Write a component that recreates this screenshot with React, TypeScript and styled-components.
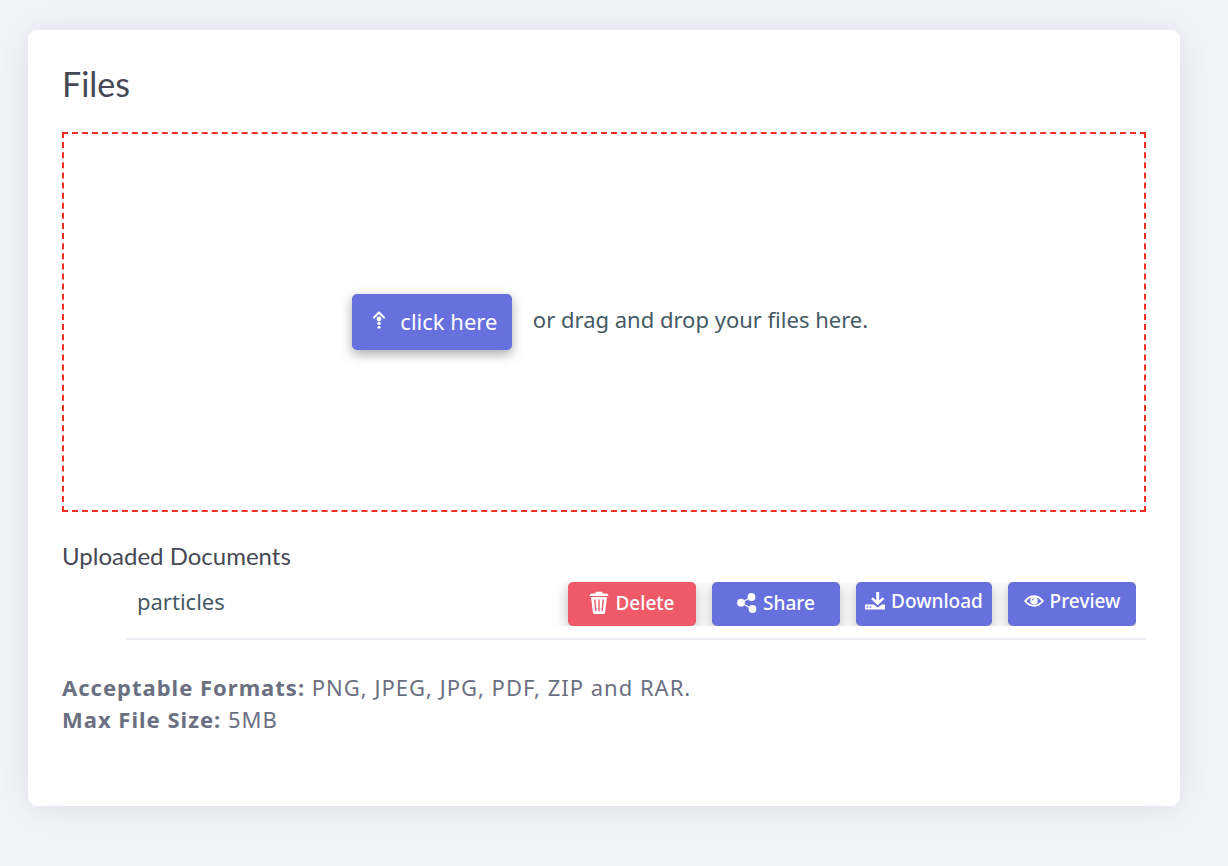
import React from "react";
import styled, { createGlobalStyle } from "styled-components";

const GlobalStyle = createGlobalStyle`
  * { box-sizing: border-box; }
  body {
    margin: 0;
    background: #f3f4fa;
    font-family: "Noto Sans", "Open Sans", sans-serif;
    color: #455a64;
  }
`;

const Page = styled.main`
  padding: 30px 48px 60px 28px;
`;

const Card = styled.section`
  padding: 32px 34px 71px;
  border-radius: 9px;
  background: #fff;
  box-shadow: 0 2px 36px rgba(69, 65, 78, 0.12);
`;

const Title = styled.h1`
  margin: 0 0 26px;
  font: 400 34px/44px Lato, sans-serif;
  color: #464855;
`;

const DropZone = styled.div`
  display: flex;
  align-items: center;
  justify-content: center;
  gap: 21px;
  height: 380px;
  padding-left: 12px;
  border: 2px dashed #ee3124;
  font-size: 22px;
  line-height: 32px;
`;

const DropHint = styled.span`
  padding-bottom: 6px;
`;

const Button = styled.button`
  display: inline-flex;
  align-items: center;
  justify-content: center;
  border: 0;
  border-radius: 5px;
  background: #6671de;
  color: #fff;
  font-family: inherit;
  cursor: pointer;
  white-space: nowrap;
`;

const UploadButton = styled(Button)`
  gap: 14px;
  width: 160px;
  height: 56px;
  padding: 0 0 2px 6px;
  font-size: 22px;
  box-shadow: 0 4px 12px rgba(0, 0, 0, 0.35);

  svg {
    margin-bottom: 2px;
  }
`;

const ActionButton = styled(Button)<{ $danger?: boolean; $wide?: boolean; $raised?: boolean }>`
  gap: 6px;
  width: ${(p) => (p.$wide ? 136 : 128)}px;
  height: 44px;
  padding: 0 0 ${(p) => (p.$raised ? 6 : 2)}px;
  background: ${(p) => (p.$danger ? "#ee5a68" : "#6671de")};
  font-size: 19px;
  font-weight: 500;
  box-shadow: 0 4px 14px rgba(0, 0, 0, 0.28);
`;

const SectionTitle = styled.h2`
  margin: 28px 0 10px;
  font: 400 24px/32px Lato, sans-serif;
  color: #464855;
`;

const DocumentList = styled.ul`
  margin: 0 0 31px;
  padding: 0 0 0 64px;
  list-style: none;
`;

const DocumentRow = styled.li`
  display: flex;
  justify-content: space-between;
  padding: 0 10px 12px 11px;
  border-bottom: 2px solid #ebedf2;
`;

const DocumentName = styled.span`
  font-size: 22px;
  line-height: 38px;
`;

const Actions = styled.div`
  display: flex;
  gap: 16px;
  padding-left: 16px;
  overflow: hidden;
`;

const Notes = styled.p`
  margin: 0;
  font-size: 22px;
  line-height: 32px;
  letter-spacing: 1px;
  color: #6b6f82;
`;

const UploadIcon = () => (
  <svg width="14" height="20" viewBox="0 0 14 20" fill="#fff" aria-hidden="true">
    <path d="M2 7.500 7 2.500l5 5" fill="none" stroke="#fff" strokeWidth="2.200" strokeLinecap="round" strokeLinejoin="round" />
    <circle cx="7" cy="9" r="2.400" />
    <circle cx="7" cy="13.300" r="1.700" />
    <circle cx="7" cy="17.300" r="1.500" />
  </svg>
);

const TrashIcon = () => (
  <svg width="20" height="24" viewBox="0 0 20 24" fill="#fff" aria-hidden="true">
    <path d="M6.500 2.500V1.600Q6.500.8 7.500.8h5q1 0 1 .8v.9h3.700Q19.500 2.500 19.500 5H.5q0-2.500 2.300-2.500z" />
    <path
      fillRule="evenodd"
      d="M2 6h16l-1.900 15.500Q15.900 23 14.500 23h-9Q4.100 23 3.900 21.500zM5 8.500l1.200 11.800h1.300L6.500 8.500zM9.300 8.500v11.800h1.400V8.500zM13.500 8.500l-1 11.800h1.300L15 8.500z"
    />
  </svg>
);

const ShareIcon = () => (
  <svg width="20" height="20" viewBox="0 0 20 20" fill="#fff" aria-hidden="true">
    <path d="M14.500 4 4 9.700l11.500 6.300" fill="none" stroke="#fff" strokeWidth="1.200" />
    <circle cx="14.500" cy="4" r="3.900" />
    <circle cx="4" cy="9.700" r="3.900" />
    <circle cx="15.500" cy="16" r="3.900" />
  </svg>
);

const DownloadIcon = () => (
  <svg width="20" height="20" viewBox="0 0 20 20" fill="#fff" aria-hidden="true">
    <path d="M11.200 1h3v8.500l3.300-3.300 1.800 1.800-6.600 6.200L6.100 8l1.800-1.800 3.300 3.300z" />
    <path
      fillRule="evenodd"
      d="M0 13.500h8.500l4.200 3 4.200-3H20V18.500H0zM1.500 15.200v1.600h1.600v-1.600zM4.600 15.200v1.600h1.600v-1.600z"
    />
  </svg>
);

const EyeIcon = () => (
  <svg width="20" height="14" viewBox="0 0 20 14" aria-hidden="true">
    <path d="M1.200 7Q5 2.200 10 2.200T18.800 7Q15 11.800 10 11.800T1.200 7z" fill="none" stroke="#fff" strokeWidth="2" strokeLinejoin="round" />
    <circle cx="10" cy="6.800" r="3.800" fill="#fff" />
    <path d="M8 6.500A2.200 2.200 0 0 1 10 4.700" fill="none" stroke="#6671de" strokeWidth="1" />
  </svg>
);

export default function App() {
  return (
    <>
      <GlobalStyle />
      <Page>
        <Card>
          <Title>Files</Title>
          <DropZone>
            <UploadButton type="button">
              <UploadIcon />
              click here
            </UploadButton>
            <DropHint>or drag and drop your files here.</DropHint>
          </DropZone>
          <SectionTitle>Uploaded Documents</SectionTitle>
          <DocumentList>
            <DocumentRow>
              <DocumentName>particles</DocumentName>
              <Actions>
                <ActionButton type="button" $danger>
                  <TrashIcon />
                  Delete
                </ActionButton>
                <ActionButton type="button">
                  <ShareIcon />
                  Share
                </ActionButton>
                <ActionButton type="button" $wide $raised>
                  <DownloadIcon />
                  Download
                </ActionButton>
                <ActionButton type="button" $raised>
                  <EyeIcon />
                  Preview
                </ActionButton>
              </Actions>
            </DocumentRow>
          </DocumentList>
          <Notes>
            <strong>Acceptable Formats:</strong> PNG, JPEG, JPG, PDF, ZIP and RAR.
            <br />
            <strong>Max File Size:</strong> 5MB
          </Notes>
        </Card>
      </Page>
    </>
  );
}
